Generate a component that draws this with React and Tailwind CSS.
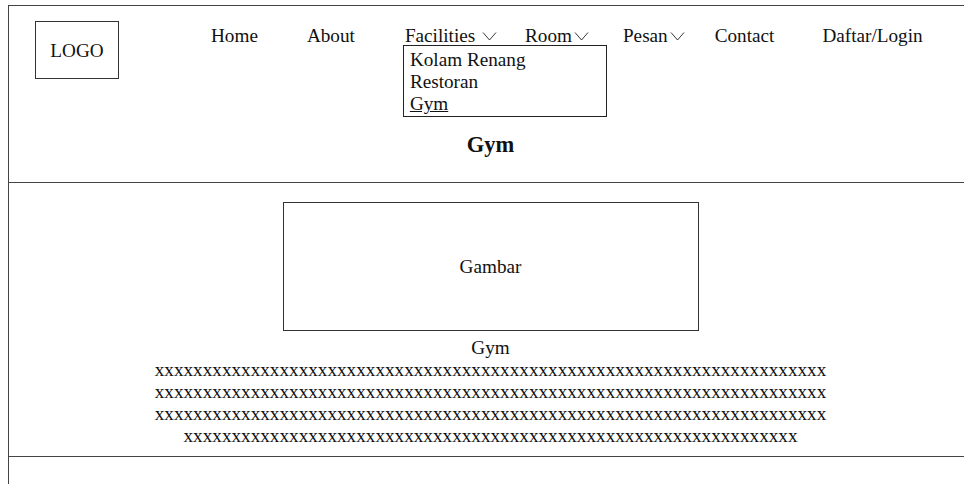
import React from 'react';

const Chevron = () => (
    <svg width="15" height="9" viewBox="0 0 15 9" className="inline-block ml-[2px] mb-[2px]">
        <polyline points="1,0.5 7.5,8 14,0.5" fill="none" stroke="#222" strokeWidth="0.9" />
    </svg>
);

const lines = [70, 70, 70, 64];

const App = () => {
    return (
        <div className="w-full h-screen overflow-hidden bg-white text-[#111] font-['Liberation_Serif',serif] text-[19.2px] leading-[22px]">
            <div className="ml-[8px] mt-[5px] w-[964px] border-t border-l border-[#444]">
                <header className="h-[177px] border-b border-[#444] pt-[15px] flex flex-col">
                    <div className="flex items-start">
                        <div className="ml-[26px] w-[84px] h-[58px] border border-[#333] flex items-center justify-center pt-[2px]">
                            LOGO
                        </div>
                        <nav className="flex items-start mt-[4px] whitespace-nowrap">
                            <a href="#" className="ml-[92px]">Home</a>
                            <a href="#" className="ml-[49px]">About</a>
                            <div className="relative ml-[50px]">
                                <span>Facilities <Chevron /></span>
                                <div className="absolute top-[20px] left-[-2px] w-[204px] h-[72px] border border-[#222] bg-white pl-[6px] pt-[3px] flex flex-col">
                                    <a href="#">Kolam Renang</a>
                                    <a href="#">Restoran</a>
                                    <a href="#" className="underline">Gym</a>
                                </div>
                            </div>
                            <span className="ml-[28px]">Room<Chevron /></span>
                            <span className="ml-[34px]">Pesan<Chevron /></span>
                            <a href="#" className="ml-[30px]">Contact</a>
                            <a href="#" className="ml-[48px]">Daftar/Login</a>
                        </nav>
                    </div>
                    <h3 className="mt-[53px] text-center font-bold text-[22.5px] leading-[26px]">Gym</h3>
                </header>
                <section className="h-[274px] border-b border-[#444] flex flex-col items-center">
                    <div className="mt-[19px] w-[416px] h-[129px] border border-[#333] flex items-center justify-center">
                        Gambar
                    </div>
                    <p className="mt-[6px]">Gym</p>
                    {lines.map((n, i) => (
                        <p key={i} className="text-center">{'x'.repeat(n)}</p>
                    ))}
                </section>
                <div className="h-[40px]"></div>
            </div>
        </div>
    );
};

export default App;
